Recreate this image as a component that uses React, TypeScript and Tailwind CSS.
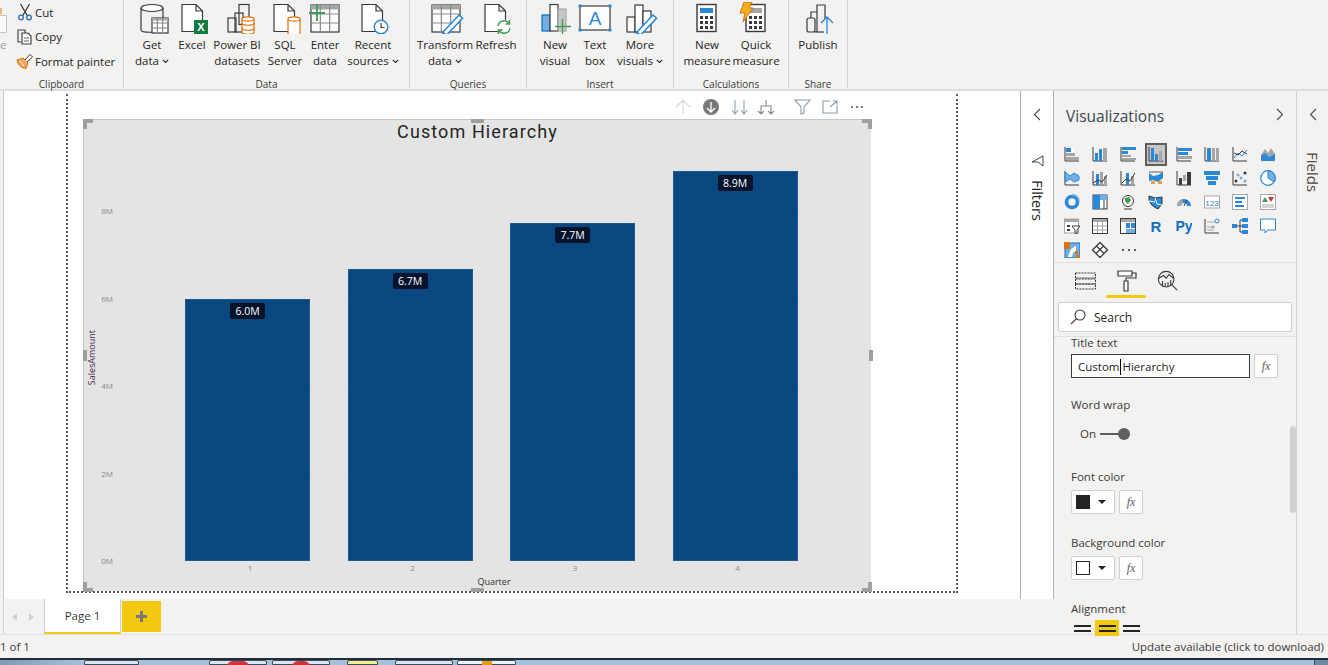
import type { ReactNode } from 'react'

const BLUE = '#2b88d8'
const LIGHT = '#71afe5'
const GRAY = '#a6a6a6'
const DARK = '#3b3a39'
const ORANGE = '#d9730d'
const GREEN = '#3f9c58'

// ---- ribbon icons, 40x32 box centred on the button ----
const Ico = ({ children }: { children: ReactNode }) => (
  <svg width="40" height="32" viewBox="0 0 40 32" fill="none" stroke={DARK} strokeWidth="1.2">
    {children}
  </svg>
)

const Page = ({ x }: { x: number }) => (
  <path d={`M${x} 2.5h14l6.5 6.5v20.5h-20.500z M${x + 14} 2.5v6.500h6.500`} fill="#fff" />
)

const Cyl = ({ x, y, w, h, color }: { x: number; y: number; w: number; h: number; color: string }) => (
  <g stroke={color} fill="#fff">
    <path d={`M${x} ${y + 2}v${h}c0 3 ${w} 3 ${w} 0v-${h}`} />
    <ellipse cx={x + w / 2} cy={y + 2} rx={w / 2} ry="2.200" />
  </g>
)

const Grid = ({ x, y, w, h }: { x: number; y: number; w: number; h: number }) => (
  <g>
    <rect x={x} y={y} width={w} height={h} fill="#fff" />
    <rect x={x} y={y} width={w} height={h / 6} fill={GRAY} stroke="none" />
    <path
      stroke="#8a8886"
      d={`M${x + w / 3} ${y}v${h}M${x + (2 * w) / 3} ${y}v${h}M${x} ${y + h / 3}h${w}M${x} ${y + (2 * h) / 3}h${w}`}
    />
  </g>
)

const Pencil = ({ x, y }: { x: number; y: number }) => (
  <g>
    <path d={`M${x} ${y + 15}l16-17l3.500 3.200l-16 17l-4.500 1.300z`} fill="#fff" stroke={BLUE} strokeWidth="1.600" />
    <path d={`M${x} ${y + 15}l-1 4.500l4.500-1.300z`} fill={BLUE} stroke={BLUE} />
  </g>
)

const GetData = () => (
  <Ico>
    <path d="M9 6v22c0 3 18 3 22 0M31 6v10" />
    <ellipse cx="20" cy="6" rx="11" ry="3.500" fill="#fff" />
    <Grid x={20} y={16} w={16} h={15} />
  </Ico>
)
const Excel = () => (
  <Ico>
    <Page x={10} />
    <rect x="22" y="18" width="14" height="14" fill="#107c41" stroke="none" />
    <text x="29" y="29" textAnchor="middle" fontSize="11" fontWeight="700" fill="#fff" stroke="none" fontFamily="Liberation Sans">
      X
    </text>
  </Ico>
)
const Datasets = () => (
  <Ico>
    <rect x="11" y="16" width="8" height="14" />
    <rect x="18" y="11" width="8" height="19" />
    <rect x="22" y="2.500" width="10" height="20" />
    <Cyl x={25} y={15} w={12} h={13} color={ORANGE} />
    <path stroke={ORANGE} d="M25 21c0 3 12 3 12 0M25 26c0 3 12 3 12 0" />
  </Ico>
)
const Sql = () => (
  <Ico>
    <Page x={9} />
    <Cyl x={23} y={15} w={12} h={14} color={ORANGE} />
  </Ico>
)
const EnterData = () => (
  <Ico>
    <Grid x={6} y={3} w={28} h={27} />
    <path stroke={GREEN} strokeWidth="1.800" d="M4 11h16M12 2v17" />
  </Ico>
)
const Recent = () => (
  <Ico>
    <Page x={9} />
    <circle cx="28" cy="25" r="6.800" fill="#fff" stroke={BLUE} strokeWidth="1.400" />
    <path stroke={DARK} d="M28 21v4.500h3.500" />
  </Ico>
)
const Transform = () => (
  <Ico>
    <Grid x={7} y={3} w={28} h={27} />
    <Pencil x={18} y={15} />
  </Ico>
)
const Refresh = () => (
  <Ico>
    <Page x={9} />
    <circle cx="28" cy="25" r="7.500" fill="#fff" stroke="none" />
    <path stroke={GREEN} strokeWidth="1.500" d="M22 24a6 6 0 0 1 11-2.500M34 26a6 6 0 0 1-11 2.500M33.500 18v4h-4M22.500 32v-4h4" />
  </Ico>
)
const NewVisual = () => (
  <Ico>
    <rect x="7" y="13" width="8" height="16" fill={LIGHT} stroke="#106ebe" />
    <rect x="15" y="2.500" width="8" height="26.500" fill="#fff" />
    <rect x="23" y="7" width="8" height="22" fill="#c8c6c4" stroke={GRAY} />
    <path stroke={GREEN} strokeWidth="1.300" d="M20 24.500h16M27.500 17v15" />
  </Ico>
)
const TextBox = () => (
  <Ico>
    <rect x="5" y="4" width="30" height="24" fill="#fff" />
    {[
      [5, 4],
      [35, 4],
      [5, 28],
      [35, 28],
    ].map(([x, y]) => (
      <rect key={`${x}-${y}`} x={x - 1.5} y={y - 1.5} width="3" height="3" fill={BLUE} stroke="none" />
    ))}
    <text x="20" y="23" textAnchor="middle" fontSize="19" fill={BLUE} stroke="none" fontFamily="Liberation Sans">
      A
    </text>
  </Ico>
)
const MoreVisuals = () => (
  <Ico>
    <rect x="7" y="15" width="8" height="15" fill="#fff" />
    <rect x="15" y="3" width="8" height="27" fill="#fff" />
    <rect x="23" y="9" width="8" height="21" fill="#fff" />
    <Pencil x={17} y={15} />
  </Ico>
)
const Calc = ({ x, screen }: { x: number; screen: string }) => (
  <g>
    <rect x={x} y="2.500" width="19" height="27" fill="#fff" stroke={DARK} strokeWidth="1.400" />
    <rect x={x + 3} y="6" width="13" height="5" fill={screen} stroke="none" />
    {[14, 19, 24].map((y) =>
      [3, 8, 13].map((dx) => <rect key={`${y}-${dx}`} x={x + dx} y={y} width="3" height="3" fill={DARK} stroke="none" />),
    )}
  </g>
)
const NewMeasure = () => (
  <Ico>
    <Calc x={10} screen={BLUE} />
  </Ico>
)
const QuickMeasure = () => (
  <Ico>
    <Calc x={10} screen={GRAY} />
    <path d="M8 0h8l-3 6h4L7 20l2-9H4z" fill="#f2b01e" stroke={ORANGE} strokeWidth="1" />
  </Ico>
)
const Publish = () => (
  <Ico>
    <rect x="9" y="16" width="8" height="14" rx="2" />
    <path d="M13 16v-6h6v20M19 10V3h8v14" />
    <path d="M17 30h9" />
    <path stroke={BLUE} strokeWidth="1.300" d="M29 32V15M23 21l6-6l6 6" />
  </Ico>
)

// ---- small ribbon icons ----
const Cut = () => (
  <svg width="16" height="18" viewBox="0 0 16 18" fill="none" stroke={DARK} strokeWidth="1.300">
    <path d="M3.500 1l7 12M12.500 1l-7 12" />
    <circle cx="4" cy="14.500" r="2.300" stroke="#2b6cb0" />
    <circle cx="12" cy="14.500" r="2.300" stroke="#2b6cb0" />
  </svg>
)
const Copy = () => (
  <svg width="16" height="16" viewBox="0 0 16 16" fill="none" stroke={DARK} strokeWidth="1.100">
    <path d="M4 13H1V1h7v3" />
    <path d="M5 4h6l3 3v8H5z" fill="#fff" />
    <path d="M7 9h5M7 12h5" strokeWidth=".8" />
  </svg>
)
const Painter = () => (
  <svg width="18" height="16" viewBox="0 0 18 16" fill="none">
    <path d="M1 7l6-2l5 5l-2 5.500c-4 0-8-3-9-8.500z" fill="#f3a35b" stroke={ORANGE} />
    <path d="M9 7l5-5.500l2.500 2.500L11 9" fill="#fff" stroke={DARK} />
    <path d="M4 8l4 5" stroke="#fff" />
  </svg>
)

const Chevron = ({ dir }: { dir: 'left' | 'right' }) => (
  <svg width="8" height="13" viewBox="0 0 8 13" fill="none" stroke="#3b4a5c" strokeWidth="1.100">
    <path d={dir === 'left' ? 'M7 1L1.500 6.500L7 12' : 'M1 1l5.500 5.500L1 12'} />
  </svg>
)

const Caret = () => (
  <svg className="ml-[3px] inline-block" width="7" height="5" viewBox="0 0 7 5" fill="none" stroke="#252423" strokeWidth="1.100">
    <path d="M.8.800l2.700 2.700L6.200.800" />
  </svg>
)

const RibbonBtn = ({ w, icon, a, b, caret }: any) => (
  <div className={`${w} flex shrink-0 flex-col items-center pt-[2px]`}>
    <div className="h-[32px] w-[40px]">{icon}</div>
    <div className="mt-[3px] whitespace-nowrap text-center leading-[16px]">
      <div>{a}</div>
      <div className="flex items-center justify-center">
        {b}
        {caret && <Caret />}
      </div>
    </div>
  </div>
)

const Group = ({ w, label, pad, children }: any) => (
  <div className={`${w} flex h-[88px] shrink-0 flex-col border-r border-[#d2d0ce]`}>
    <div className={`${pad} flex h-[76px]`}>{children}</div>
    <div className="h-[12px] text-center text-[10px] leading-[16px] text-[#3b3a39]">{label}</div>
  </div>
)

const SmallBtn = ({ icon, label }: any) => (
  <div className="flex h-[24.500px] items-center">
    <div className="flex w-[20px] justify-center">{icon}</div>
    <span>{label}</span>
  </div>
)

const Ribbon = () => (
  <div className="flex h-[91px] shrink-0 border-b-2 border-[#e1dfdd] bg-[#f3f2f1] text-[11.500px] text-[#252423]">
    <Group w="w-[124px]" label="Clipboard" pad="">
      <div className="w-[15px] pt-[8px]">
        <div className="h-[6px] w-[2px] bg-[#f3b27a]" />
        <div className="mt-[1px] h-[18px] w-[7px] border-y border-r border-[#c8c6c4] bg-[#f8f8f8]" />
        <div className="mt-[4px] leading-[16px] text-[#a19f9d]">e</div>
      </div>
      <div>
        <SmallBtn icon={<Cut />} label="Cut" />
        <SmallBtn icon={<Copy />} label="Copy" />
        <SmallBtn icon={<Painter />} label="Format painter" />
      </div>
    </Group>
    <Group w="w-[286px]" label="Data" pad="pl-[8px]">
      <RibbonBtn w="w-[40px]" icon={<GetData />} a="Get" b="data" caret />
      <RibbonBtn w="w-[40px]" icon={<Excel />} a="Excel" />
      <RibbonBtn w="w-[50px]" icon={<Datasets />} a="Power BI" b="datasets" />
      <RibbonBtn w="w-[46px]" icon={<Sql />} a="SQL" b="Server" />
      <RibbonBtn w="w-[34px]" icon={<EnterData />} a="Enter" b="data" />
      <RibbonBtn w="w-[62px]" icon={<Recent />} a="Recent" b="sources" caret />
    </Group>
    <Group w="w-[117px]" label="Queries" pad="pl-[8px]">
      <RibbonBtn w="w-[54px]" icon={<Transform />} a="Transform" b="data" caret />
      <RibbonBtn w="w-[48px]" icon={<Refresh />} a="Refresh" />
    </Group>
    <Group w="w-[147px]" label="Insert" pad="pl-[8px]">
      <RibbonBtn w="w-[40px]" icon={<NewVisual />} a="New" b="visual" />
      <RibbonBtn w="w-[40px]" icon={<TextBox />} a="Text" b="box" />
      <RibbonBtn w="w-[50px]" icon={<MoreVisuals />} a="More" b="visuals" caret />
    </Group>
    <Group w="w-[115px]" label="Calculations" pad="pl-[8px]">
      <RibbonBtn w="w-[50px]" icon={<NewMeasure />} a="New" b="measure" />
      <RibbonBtn w="w-[48px]" icon={<QuickMeasure />} a="Quick" b="measure" />
    </Group>
    <Group w="w-[59px]" label="Share" pad="pl-[7px]">
      <RibbonBtn w="w-[44px]" icon={<Publish />} a="Publish" />
    </Group>
  </div>
)

// ---- the chart ----
const bars = [
  { q: '1', v: '6.0M', h: 262 },
  { q: '2', v: '6.7M', h: 292 },
  { q: '3', v: '7.7M', h: 338 },
  { q: '4', v: '8.9M', h: 390 },
]
const ticks = ['8M', '6M', '4M', '2M', '0M']

const Handle = ({ className }: { className: string }) => <div className={`absolute bg-[#a19f9d] ${className}`} />

const Corner = ({ className, d }: { className: string; d: string }) => (
  <svg className={`absolute ${className}`} width="10" height="10" viewBox="0 0 10 10" fill="#a19f9d">
    <path d={d} />
  </svg>
)

const HeaderIcons = () => (
  <svg width="196" height="20" viewBox="0 0 196 20" fill="none" stroke="#8a8886" strokeWidth="1.100">
    <path stroke="#d6d3d9" d="M8 17V3M1 10l7-7l7 7" />
    <circle cx="36" cy="10" r="8" fill="#7a7876" stroke="none" />
    <path stroke="#fff" strokeWidth="1.300" d="M36 5v10M32 11l4 4l4-4" />
    <path stroke="#8fa3b5" d="M60 3v14M57 13l3 4l3-4M69 3v14M66 13l3 4l3-4" />
    <path d="M91 3v6M86 17V9h10v8M83 14l3 3l3-3M93 14l3 3l3-3" />
    <path stroke="#8a9aa8" d="M120 3h15l-6 7v6l-3 1v-7z" />
    <path stroke="#8a9aa8" d="M155 4h-7v12h14v-7M155 10l7-6M158 4h4v4" />
    <g fill="#7a7876" stroke="none">
      <rect x="176" y="9" width="2" height="2" />
      <rect x="181" y="9" width="2" height="2" />
      <rect x="186" y="9" width="2" height="2" />
    </g>
  </svg>
)

const Chart = () => (
  <div className="relative ml-[15px] h-[472px] w-[788px] border-l border-t border-[#c8c6c4] bg-[#e4e4e4]">
    <Corner className="-left-[1px] -top-[1px]" d="M0 0h10v4H4v6H0z" />
    <Corner className="-right-[1px] -top-[1px]" d="M0 0h10v10H6V4H0z" />
    <Corner className="-bottom-[1px] -left-[1px]" d="M0 0h4v6h6v4H0z" />
    <Corner className="-bottom-[1px] -right-[1px]" d="M6 0h4v10H0V6h6z" />
    <Handle className="-top-[1px] left-[387px] h-[4px] w-[13px]" />
    <Handle className="-bottom-[1px] left-[387px] h-[4px] w-[13px]" />
    <Handle className="-left-[1px] top-[230px] h-[11px] w-[4px]" />
    <Handle className="-right-[2px] top-[230px] h-[11px] w-[4px]" />

    <div className="h-[24px] text-center font-['Roboto',sans-serif] text-[18px] leading-[24px] tracking-[1.1px] text-[#252423]">
      Custom Hierarchy
    </div>

    <div className="flex h-[417px]">
      <div className="relative w-[16px] shrink-0">
        <div className="absolute bottom-[176px] left-[3px] font-['Open_Sans',sans-serif] text-[9px] font-medium leading-[10px] text-[#4a2a44] [transform:rotate(180deg)] [writing-mode:vertical-rl]">
          SalesAmount
        </div>
      </div>
      <div className="mt-[61px] flex h-[362px] w-[13px] shrink-0 flex-col justify-between text-right font-['Open_Sans',sans-serif] text-[8px] leading-[12px] text-[#8a8886]">
        {ticks.map((t) => (
          <div key={t}>{t}</div>
        ))}
      </div>
      <div className="relative ml-[8px] flex h-[417px] flex-1 items-end gap-[37.500px] pl-[64px]">
        {[349, 261, 174, 87].map((b) => (
          <div key={b} className="absolute left-[0px] right-[10px] border-t border-dotted border-[#dcdbda]" style={{ bottom: b }} />
        ))}
        {bars.map((b) => (
          <div key={b.q} className="relative flex w-[125px] justify-center border border-[#1d5a94] bg-[#0a477f] pt-[3px]" style={{ height: b.h }}>
            <div className="h-[16px] w-[35px] rounded-[2px] bg-[#03132b] text-center font-['Open_Sans',sans-serif] text-[10.500px] font-medium leading-[16px] text-white">
              {b.v}
            </div>
          </div>
        ))}
      </div>
    </div>

    <div className="flex gap-[37.500px] pl-[103.500px] pt-[1px]">
      {bars.map((b) => (
        <div key={b.q} className="w-[125px] text-center font-['Open_Sans',sans-serif] text-[8px] leading-[12px] text-[#8a8886]">
          {b.q}
        </div>
      ))}
    </div>
    <div className="mt-[2px] pl-[33px] text-center font-['Open_Sans',sans-serif] text-[9px] font-medium leading-[12px] text-[#33302e]">
      Quarter
    </div>
  </div>
)

// ---- visualizations gallery, 16x16 each ----
const Ax = () => <path d="M1 1v14h14" stroke={DARK} fill="none" />
const R = ({ x, y, w, h, c }: { x: number; y: number; w: number; h: number; c: string }) => (
  <rect x={x} y={y} width={w} height={h} fill={c} stroke="none" />
)

const vizIcons: ReactNode[] = [
  <><Ax /><R x={2} y={2} w={5} h={4} c={BLUE} /><R x={7} y={2} w={3} h={4} c="#fff" /><R x={2} y={7} w={9} h={3} c={GRAY} /><R x={2} y={11} w={13} h={3} c={GRAY} /></>,
  <><Ax /><R x={3} y={7} w={3} h={8} c={BLUE} /><R x={7} y={3} w={3} h={12} c={BLUE} /><R x={11} y={2} w={4} h={13} c={GRAY} /></>,
  <><Ax /><R x={2} y={1} w={14} h={3} c={BLUE} /><R x={2} y={5} w={6} h={3} c={BLUE} /><R x={2} y={9} w={9} h={2} c={GRAY} /><R x={2} y={12} w={14} h={2} c={GRAY} /></>,
  <><Ax /><R x={3} y={2} w={3} h={13} c={BLUE} /><R x={7} y={8} w={3} h={7} c={BLUE} /><R x={11} y={5} w={3} h={10} c={GRAY} /></>,
  <><Ax /><R x={2} y={2} w={14} h={3} c={BLUE} /><R x={2} y={6} w={10} h={3} c={BLUE} /><R x={2} y={10} w={14} h={3} c={GRAY} /></>,
  <><Ax /><R x={3} y={2} w={4} h={13} c={BLUE} /><R x={8} y={2} w={3} h={13} c={GRAY} /><R x={12} y={2} w={3} h={13} c={GRAY} /></>,
  <><Ax /><path d="M2 12l4-5l4 3l5-6" stroke={BLUE} fill="none" /><path d="M2 7l4 2l4-4l5 3" stroke={DARK} fill="none" /></>,
  <><path d="M1 15V9l4-6l3 4l3-5l4 6v7z" fill={GRAY} /><path d="M1 15v-5l4-3l4 4l6-3v7z" fill={BLUE} /></>,
  <><Ax /><path d="M1 2l5 4l4-3l5 3v4l-5 2l-4-3l-5 3z" fill={LIGHT} stroke={BLUE} /></>,
  <><Ax /><R x={4} y={4} w={3} h={11} c={BLUE} /><R x={8} y={2} w={3} h={13} c={GRAY} /><R x={12} y={6} w={3} h={9} c={GRAY} /><path d="M1 13l5-3l4 2l5-7" stroke={DARK} fill="none" /></>,
  <><Ax /><R x={6} y={3} w={3} h={12} c={BLUE} /><R x={11} y={6} w={3} h={9} c={GRAY} /><path d="M2 13l4-4l4 2l5-8" stroke={DARK} fill="none" /></>,
  <><R x={1} y={1} w={14} h={2} c={GRAY} /><path d="M1 3l4 3l5-1l5-3v6l-5 4l-5-2l-4 1z" fill={BLUE} /><R x={3} y={11} w={4} h={3} c="#f0a030" /><R x={10} y={11} w={4} h={3} c="#f0a030" /></>,
  <><Ax /><R x={3} y={8} w={3} h={7} c={DARK} /><R x={7} y={5} w={3} h={6} c={GRAY} /><R x={11} y={2} w={4} h={13} c={DARK} /></>,
  <><R x={0} y={1} w={16} h={4} c={BLUE} /><R x={2} y={6} w={12} h={4} c={BLUE} /><R x={4} y={11} w={8} h={4} c={BLUE} /></>,
  <><Ax /><circle cx="4" cy="11" r="1.500" fill={DARK} /><circle cx="6" cy="5" r="1.500" fill={LIGHT} /><circle cx="9" cy="8" r="1.500" fill={LIGHT} /><circle cx="13" cy="3" r="1.500" fill={DARK} /><circle cx="13" cy="11" r="1.500" fill={LIGHT} /></>,
  <><circle cx="8" cy="8" r="7.300" fill="#fff" stroke={BLUE} strokeWidth="1.300" /><path d="M8 8V.7A7.300 7.300 0 0 1 14 12z" fill={LIGHT} stroke={BLUE} /></>,
  <><circle cx="8" cy="8" r="5.500" fill="none" stroke={BLUE} strokeWidth="3.600" /><path d="M8 .8a7.200 7.200 0 0 1 7 6" fill="none" stroke={LIGHT} strokeWidth="2" /></>,
  <><rect x="1" y="1" width="14" height="14" fill="#fff" stroke={DARK} /><R x={1} y={1} w={7} h={14} c={BLUE} /><R x={8} y={1} w={7} h={5} c={LIGHT} /><path d="M12 6v9" stroke={DARK} /></>,
  <><circle cx="8" cy="7" r="5.500" fill="#fff" stroke={DARK} /><path d="M5 4l4-1l2 3l-3 4l-3-3z" fill={GREEN} /><path d="M4 15h8" stroke={DARK} /></>,
  <><path d="M1 2l6 2l7-1v7l-4 5l-4-2l-3-3l-2-4z" fill={BLUE} stroke={DARK} /><path d="M7 4l2 6l5 1M1 7l6 1" stroke="#fff" fill="none" /></>,
  <><path d="M1 12a7 7 0 0 1 14 0h-4a3 3 0 0 0-6 0z" fill={BLUE} /><path d="M1 12a7 7 0 0 1 5-6.500l1.500 4A3 3 0 0 0 5 12z" fill={GRAY} /><path d="M8 12l3-6" stroke={DARK} /></>,
  <><rect x="0.500" y="2" width="15" height="12" fill="#fff" stroke={GRAY} /><text x="8" y="12" textAnchor="middle" fontSize="8" fill={BLUE} fontFamily="Liberation Sans">123</text></>,
  <><rect x="0.500" y="0.500" width="15" height="15" fill="#fff" stroke={GRAY} /><R x={3} y={3} w={10} h={2} c={BLUE} /><R x={3} y={7} w={7} h={2} c={BLUE} /><R x={3} y={11} w={9} h={2} c={BLUE} /></>,
  <><rect x="0.500" y="0.500" width="15" height="15" fill="#fff" stroke={GRAY} /><path d="M2 8l3-5l3 5z" fill={GREEN} /><path d="M8 3h6l-3 5z" fill="#d13438" /><path d="M2 11h12M2 13h12" stroke={GRAY} /></>,
  <><rect x="0.500" y="1" width="14" height="14" fill="#fff" stroke={GRAY} /><R x={1} y={1} w={14} h={3} c={GRAY} /><R x={3} y={7} w={3} h={2} c={DARK} /><R x={3} y={11} w={3} h={2} c={DARK} /><path d="M8 8h8l-3 4v4l-2-1v-3z" fill="#fff" stroke={DARK} /></>,
  <><rect x="0.500" y="0.500" width="15" height="15" fill="#fff" stroke={DARK} /><R x={1} y={1} w={14} h={3} c={GRAY} /><path d="M1 8h14M1 12h14M5.500 1v14M10.500 1v14" stroke={GRAY} /></>,
  <><rect x="0.500" y="0.500" width="15" height="15" fill="#fff" stroke={DARK} /><R x={1} y={1} w={14} h={3} c={GRAY} /><R x={6} y={5} w={4} h={5} c={BLUE} /><R x={11} y={5} w={4} h={5} c={BLUE} /><R x={6} y={11} w={9} h={4} c={LIGHT} /></>,
  <text x="8" y="14" textAnchor="middle" fontSize="15" fontWeight="700" fill="#106ebe" fontFamily="Liberation Sans">R</text>,
  <text x="8" y="13" textAnchor="middle" fontSize="14" fontWeight="700" fill="#106ebe" fontFamily="Liberation Sans">Py</text>,
  <><Ax /><path d="M3 4h8M3 9h5M3 12h7" stroke={GRAY} /><circle cx="13" cy="3" r="2" fill="#fff" stroke={BLUE} /><circle cx="9" cy="9" r="1.500" fill={GRAY} /></>,
  <><R x={0} y={6} w={5} h={4} c={BLUE} /><R x={10} y={0} w={6} h={4} c={BLUE} /><R x={10} y={6} w={6} h={4} c={BLUE} /><R x={10} y={12} w={6} h={4} c={BLUE} /><path d="M5 8h5M8 2v12M8 2h2M8 14h2" stroke={DARK} fill="none" /></>,
  <path d="M0.500 1h15v11H8l-3 3v-3H0.500z" fill="#fff" stroke={BLUE} />,
  <><rect x="1" y="1" width="15" height="15" fill={LIGHT} stroke="#106ebe" /><path d="M4 15l3-8l5-3v5l-3 2l-1 4z" fill="#fff" /><R x={0} y={0} w={6} h={7} c={ORANGE} /><R x={11} y={9} w={3} h={3} c={ORANGE} /><R x={12} y={13} w={4} h={3} c={ORANGE} /></>,
  <path d="M8 0.500l7.500 7.500L8 15.500L0.500 8zM4.500 4l7.500 7.500M11.500 4L4 11.500" fill="#fff" stroke={DARK} strokeWidth="1.300" />,
  <g fill="#605e5c"><rect x="2" y="7" width="2" height="2" /><rect x="8" y="7" width="2" height="2" /><rect x="14" y="7" width="2" height="2" /></g>,
]

const Gallery = () => (
  <div className="ml-[4px] mt-[24px] grid h-[120px] w-[224px] grid-cols-8 grid-rows-5">
    {vizIcons.map((icon, i) => (
      <div key={i} className="flex items-center justify-center">
        <div className={i === 3 ? 'flex h-[23px] w-[22px] items-center justify-center border-2 border-[#605e5c] bg-[#c8c6c4]' : 'flex'}>
          <svg width="16" height="16" viewBox="0 0 16 16">
            {icon}
          </svg>
        </div>
      </div>
    ))}
  </div>
)

const Fx = ({ className }: { className: string }) => (
  <div className={`${className} flex items-center justify-center rounded-[2px] border border-[#d2d0ce] bg-white font-['Liberation_Serif',serif] text-[12px] italic text-[#605e5c]`}>
    fx
  </div>
)

const ColorRow = ({ label, swatch, mt }: any) => (
  <div className={mt}>
    <div className="leading-[16px]">{label}</div>
    <div className="mt-[5px] flex gap-[4px]">
      <div className="flex h-[24px] w-[44px] items-center rounded-[2px] border border-[#d2d0ce] bg-white pl-[4px]">
        <div className={`h-[14px] w-[14px] ${swatch}`} />
        <div className="ml-[8px] h-0 w-0 border-x-[4px] border-t-[4px] border-x-transparent border-t-[#252423]" />
      </div>
      <Fx className="h-[24px] w-[24px]" />
    </div>
  </div>
)

const AlignIcon = () => (
  <div className="flex flex-col gap-[3px]">
    <div className="h-[2px] w-[17px] bg-[#252423]" />
    <div className="h-[2px] w-[17px] bg-[#252423]" />
  </div>
)

const VizPane = () => (
  <div className="relative flex w-[243px] shrink-0 flex-col border-r border-[#d2d0ce] bg-[#f3f2f1] text-[11.500px] text-[#3b3a39]">
    <div className="flex h-[27px] items-start justify-between pl-[12px] pr-[12px] pt-[12px]">
      <div className="text-[15.500px] font-medium leading-[26px] text-[#3b4652]">Visualizations</div>
      <div className="pt-[5px]"><Chevron dir="right" /></div>
    </div>
    <Gallery />
    <div className="border-t border-[#e1dfdd]" />
    <div className="flex h-[32px] items-center pl-[21px] pt-[4px]">
      <svg width="21" height="18" viewBox="0 0 21 18" fill="none" stroke="#3b3a39" strokeDasharray="2 1">
        <path d="M.5 1h20v5H.5zM.5 7h20v5H.5zM.5 12h20v5H.5z" />
      </svg>
      <svg className="ml-[21px]" width="20" height="22" viewBox="0 0 20 22" fill="#fff" stroke="#3b3a39" strokeWidth="1.200">
        <path d="M1 1h14v5H1z" />
        <path d="M15 3h4v5H9v3" fill="none" />
        <path d="M7 11h4v10H7z" />
      </svg>
      <svg className="ml-[20px]" width="22" height="22" viewBox="0 0 24 24" fill="none" stroke="#3b3a39" strokeWidth="1.200">
        <circle cx="10" cy="10" r="8.500" />
        <path d="M2 9l5-3l3 3l3-4l5 4M6 18v-6M9 18v-4M12 18v-5M15 17v-6" />
        <path d="M16 16l6 6" />
      </svg>
    </div>
    <div className="ml-[52px] h-[3px] w-[40px] rounded-[2px] bg-[#f2c811]" />
    <div className="ml-[4px] mt-[4px] flex h-[30px] w-[234px] items-center rounded-[2px] border border-[#d2d0ce] bg-white pl-[11px]">
      <svg width="16" height="16" viewBox="0 0 16 16" fill="none" stroke="#3b3a39" strokeWidth="1.100">
        <circle cx="10" cy="6" r="5" />
        <path d="M6.500 9.500L1 15" stroke="#7a2a2a" />
      </svg>
      <span className="ml-[8px] pt-[1px] text-[12px] text-[#252423]">Search</span>
    </div>
    <div className="mt-[4px] border-t border-[#e1dfdd]" />

    <div className="min-h-0 flex-1 pl-[17px]">
      <div className="-mt-[2px] leading-[16px]">Title text</div>
      <div className="mt-[3px] flex gap-[4px]">
        <div className="flex h-[24px] w-[179px] items-center border border-[#3b3a39] bg-white pl-[6px] pt-[1px] text-[#252423]">
          Custom
          <span className="mx-[1px] inline-block h-[16px] w-[1px] bg-black" />
          Hierarchy
        </div>
        <Fx className="h-[24px] w-[24px]" />
      </div>
      <div className="mt-[19px] leading-[16px]">Word wrap</div>
      <div className="mt-[13px] flex h-[16px] items-center pl-[9px]">
        <span>On</span>
        <div className="ml-[4px] h-[2px] w-[18px] bg-[#605e5c]" />
        <div className="h-[12px] w-[12px] rounded-full bg-[#605e5c]" />
      </div>
      <ColorRow label="Font color" swatch="bg-[#252423]" mt="mt-[27px]" />
      <ColorRow label="Background color" swatch="border border-[#252423] bg-white" mt="mt-[21px]" />
      <div className="mt-[21px] leading-[16px]">Alignment</div>
      <div className="mt-[3px] flex items-center pl-[3px]">
        <AlignIcon />
        <div className="ml-[4px] flex h-[16px] w-[24px] items-center justify-center bg-[#f2c811]">
          <AlignIcon />
        </div>
        <div className="ml-[4px]"><AlignIcon /></div>
      </div>
    </div>
    <div className="absolute right-[0px] top-[335px] h-[87px] w-[6px] rounded-[3px] bg-[#d2d0ce]" />
  </div>
)

const Taskbar = () => (
  <div className="flex h-[7px] shrink-0 overflow-hidden border-t-2 border-[#1f2d3d] bg-[#a7c0da]">
    <div className="w-[84px] bg-gradient-to-r from-[#7f98b4] to-[#a7c0da]" />
    <div className="w-[55px] rounded-t-[2px] border border-[#3b4a5c] bg-[#dbe6f1]" />
    <div className="ml-[70px] flex w-[58px] justify-center rounded-t-[2px] border border-[#3b4a5c] bg-[#dbe6f1]">
      <div className="h-[6px] w-[22px] rounded-t-full bg-[#d13438]" />
    </div>
    <div className="ml-[5px] flex w-[58px] justify-center rounded-t-[2px] border border-[#3b4a5c] bg-[#dbe6f1]">
      <div className="h-[6px] w-[18px] rounded-t-full bg-[#d13438]" />
    </div>
    <div className="ml-[17px] w-[31px] rounded-t-[2px] border border-[#3b4a5c] bg-[#f5f08a]" />
    <div className="ml-[17px] w-[58px] rounded-t-[2px] border border-[#3b4a5c] bg-[#dbe6f1]" />
    <div className="ml-[4px] flex w-[59px] justify-center rounded-t-[2px] border border-[#3b4a5c] bg-[#eef3f8]">
      <div className="h-[6px] w-[10px] bg-[#e0a010]" />
    </div>
    <div className="ml-auto w-[14px] border-l border-[#3b4a5c] bg-[#6f87a0]" />
  </div>
)

const App = () => {
  return (
    <div className="flex h-[665px] w-[1328px] flex-col overflow-hidden bg-[#f3f2f1] font-['Open_Sans',sans-serif] text-[11.500px]">
      <Ribbon />

      <div className="flex h-[543px] shrink-0">
        <div className="flex w-[1054px] shrink-0 flex-col">
          <div className="flex h-[508px] shrink-0">
            <div className="w-[3px] shrink-0 bg-[#f3f2f1]" />
            <div className="w-[1017px] shrink-0 border-l border-[#c8c6c4] bg-white pl-[62px] pt-[3px]">
              <div className="h-[499px] w-[892px] border-x-2 border-b-2 border-dotted border-[#555]">
                <div className="flex h-[25px] justify-end pr-[85px] pt-[3px]">
                  <HeaderIcons />
                </div>
                <Chart />
              </div>
            </div>
            <div className="flex w-[34px] shrink-0 flex-col items-center border-x border-[#b3b0ad] bg-white pt-[17px]">
              <Chevron dir="left" />
              <svg className="mt-[34px]" width="13" height="12" viewBox="0 0 13 12" fill="#fff" stroke="#3b4a5c">
                <path d="M12 1v10L7 7H1z" />
              </svg>
              <div className="mt-[13px] text-[14.500px] font-medium leading-[16px] text-[#252423] [writing-mode:vertical-rl]">Filters</div>
            </div>
          </div>
          <div className="flex h-[35px] items-stretch">
            <div className="ml-[3px] flex w-[44px] items-center gap-[12px] border-l border-[#d2d0ce] pl-[8px]">
              <div className="h-0 w-0 border-y-[4px] border-r-[5px] border-y-transparent border-r-[#d2d0ce]" />
              <div className="h-0 w-0 border-y-[4px] border-l-[5px] border-y-transparent border-l-[#d2d0ce]" />
            </div>
            <div className="-ml-[3px] flex w-[77px] items-center justify-center border-x border-b-2 border-[#d2d0ce] border-b-[#f2c811] bg-white pt-[1px] text-[#3b3a39]">
              Page 1
            </div>
            <div className="ml-[1px] mt-[2px] flex h-[31px] w-[39px] items-center justify-center bg-[#f2c811]">
              <div className="relative h-[11px] w-[11px]">
                <div className="absolute left-[4px] top-0 h-[11px] w-[3px] bg-[#7a7876]" />
                <div className="absolute left-0 top-[4px] h-[3px] w-[11px] bg-[#7a7876]" />
              </div>
            </div>
          </div>
        </div>
        <VizPane />
        <div className="flex flex-1 flex-col items-center pt-[17px]">
          <Chevron dir="left" />
          <div className="mt-[31px] text-[15px] leading-[16px] text-[#4a4845] [writing-mode:vertical-rl]">Fields</div>
        </div>
      </div>

      <div className="flex h-[24px] shrink-0 items-center justify-between border-t border-[#e1dfdd] pr-[4px] text-[#3b3a39]">
        <span>1 of 1</span>
        <span>Update available (click to download)</span>
      </div>
      <Taskbar />
    </div>
  )
}

export default App
